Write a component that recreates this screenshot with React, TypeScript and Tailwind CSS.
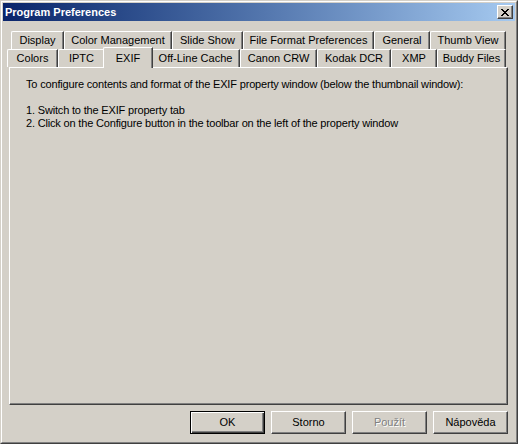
import React from 'react';

const row1 = [
    { label: 'Display', w: 'w-[53px]' },
    { label: 'Color Management', w: 'w-[108px]' },
    { label: 'Slide Show', w: 'w-[71px]' },
    { label: 'File Format Preferences', w: 'w-[131px]' },
    { label: 'General', w: 'w-[56px]' },
    { label: 'Thumb View', w: 'w-[76px]' },
];

const row2 = [
    { label: 'Colors', w: 'w-[51px]' },
    { label: 'IPTC', w: 'w-[47px]' },
    { label: 'EXIF', w: 'w-[50px]', active: true },
    { label: 'Off-Line Cache', w: 'w-[89px]' },
    { label: 'Canon CRW', w: 'w-[77px]' },
    { label: 'Kodak DCR', w: 'w-[74px]' },
    { label: 'XMP', w: 'w-[46px]' },
    { label: 'Buddy Files', w: 'w-[69px]' },
];

const Tab: React.FC<{ label: string; w: string; active?: boolean }> = ({ label, w, active }) => {
    if (active) {
        // selected tab: 2px wider on each side and 2px taller, covers the panel's top edge
        return (
            <div
                className={`${w} shrink-0 relative z-10 -mx-[2px] -mt-[2px] -mb-[1px] h-[21px] bg-[#d4d0c8] border-l border-t border-r border-l-white border-t-white border-r-[#404040] shadow-[inset_-1px_0_#808080] rounded-tl-[2px] flex items-start justify-center pt-[2px]`}
            >
                {label}
            </div>
        );
    }
    return (
        <div
            className={`${w} h-[18px] shrink-0 bg-[#d4d0c8] border-l border-t border-r border-l-white border-t-white border-r-[#404040] shadow-[inset_-1px_0_#808080] rounded-tl-[2px] flex items-center justify-center`}
        >
            {label}
        </div>
    );
};

const Button: React.FC<{ label: string; isDefault?: boolean; disabled?: boolean }> = ({ label, isDefault, disabled }) => (
    <div
        className={`w-[75px] h-[23px] flex items-center justify-center bg-[#d4d0c8] ${
            isDefault
                ? 'border border-black shadow-[inset_1px_1px_#ffffff,inset_-1px_-1px_#404040,inset_-2px_-2px_#808080]'
                : 'border border-t-white border-l-white border-r-[#404040] border-b-[#404040] shadow-[inset_-1px_-1px_#808080]'
        }`}
    >
        <span className={disabled ? 'text-[#808080] [text-shadow:1px_1px_#ffffff]' : 'text-black'}>{label}</span>
    </div>
);

const App: React.FC = () => {
    return (
        <div
            className="w-[518px] h-[444px] bg-[#d4d0c8] border border-t-[#d4d0c8] border-l-[#d4d0c8] border-r-[#404040] border-b-[#404040] text-[11px] text-black overflow-hidden"
            style={{ fontFamily: '"Liberation Sans", Arial, sans-serif' }}
        >
            <div className="w-full h-full border border-t-white border-l-white border-r-[#808080] border-b-[#808080] p-[1px] flex flex-col">
                {/* Title bar */}
                <div className="h-[18px] bg-gradient-to-r from-[#0a246a] to-[#a6caf0] flex items-center justify-between pl-[2px] pr-[2px]">
                    <span className="text-white font-bold text-[11px]">Program Preferences</span>
                    <div className="w-[16px] h-[14px] bg-[#d4d0c8] border border-t-white border-l-white border-r-[#404040] border-b-[#404040] shadow-[inset_-1px_-1px_#808080] flex items-center justify-center">
                        <svg width="8" height="7" viewBox="0 0 8 7">
                            <path d="M0 0h2v1h-2zM6 0h2v1h-2zM1 1h2v1h-2zM5 1h2v1h-2zM2 2h4v1h-4zM3 3h2v1h-2zM2 4h4v1h-4zM1 5h2v1h-2zM5 5h2v1h-2zM0 6h2v1h-2zM6 6h2v1h-2z" fill="#000" />
                        </svg>
                    </div>
                </div>

                {/* Tabs */}
                <div className="flex flex-col mt-[10px]">
                    <div className="flex pl-[8px]">
                        {row1.map((t) => (
                            <Tab key={t.label} {...t} />
                        ))}
                    </div>
                    <div className="flex pl-[4px]">
                        {row2.map((t) => (
                            <Tab key={t.label} {...t} />
                        ))}
                    </div>
                </div>

                {/* Panel */}
                <div className="ml-[6px] w-[499px] h-[338px] border border-t-white border-l-white border-r-[#404040] border-b-[#404040] shadow-[inset_-1px_-1px_#808080] pl-[16px] pt-[10px] leading-[13px] tracking-[-0.17px]">
                    <p>To configure contents and format of the EXIF property window (below the thumbnail window):</p>
                    <p className="mt-[13px]">1. Switch to the EXIF property tab</p>
                    <p>2. Click on the Configure button in the toolbar on the left of the property window</p>
                </div>

                {/* Buttons */}
                <div className="flex justify-end gap-[6px] mt-[6px] pr-[7px]">
                    <Button label="OK" isDefault />
                    <Button label="Storno" />
                    <Button label="Použít" disabled />
                    <Button label="Nápověda" />
                </div>
            </div>
        </div>
    );
};

export default App;
